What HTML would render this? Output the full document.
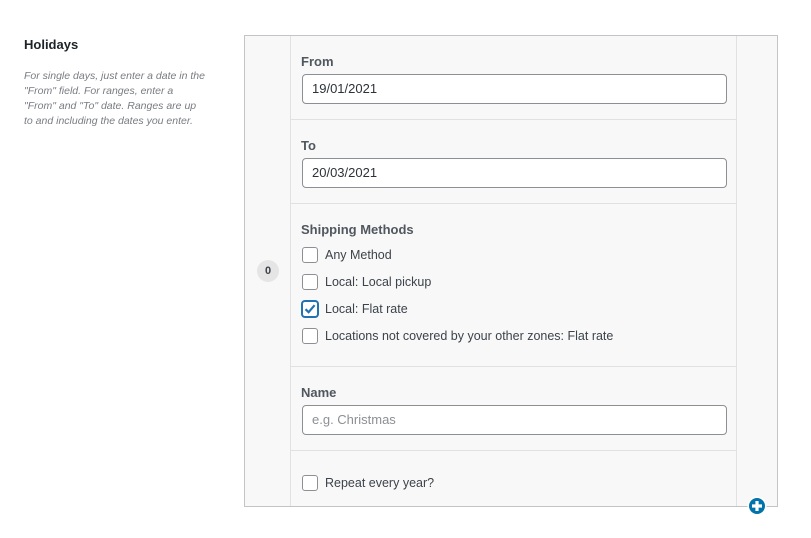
<!DOCTYPE html>
<html><head><style>
body{margin:0;background:#fff;font-family:"Liberation Sans",Arial,sans-serif;color:#3c434a;width:811px;height:538px;position:relative;overflow:hidden}
.a{position:absolute}
h3{position:absolute;left:24px;top:37px;margin:0;font-size:13px;font-weight:bold;color:#1d2327}
.desc{left:24px;top:69px;width:215px;font-size:10.5px;font-style:italic;color:#787c82;line-height:15px;white-space:nowrap}
.box{left:244px;top:35px;width:532px;height:470px;border:1px solid #c3c4c7;background:#f8f8f8}
.lc{left:0;top:0;width:45px;height:470px;border-right:1px solid #e1e1e1}
.rc{left:491px;top:0;width:40px;height:470px;border-left:1px solid #e1e1e1}
.row{position:absolute;left:46px;width:445px;border-bottom:1px solid #e1e1e1}
.lbl{position:absolute;left:10px;font-size:13px;font-weight:bold;color:#50575e}
.inp{position:absolute;left:11px;width:423px;height:28px;border:1px solid #8c8f94;border-radius:4px;background:#fff;font-size:13px;line-height:28px;text-indent:9px;color:#2c3338;box-sizing:content-box}
.cb{position:absolute;left:11px;width:14px;height:14px;border:1px solid #8c8f94;border-radius:3px;background:#fff}
.ct{position:absolute;left:34px;font-size:12.5px;color:#3c434a}
.badge{left:12px;top:224px;width:22px;height:22px;border-radius:50%;background:#e5e5e5;font-size:11px;font-weight:bold;text-align:center;line-height:22px;color:#3c434a}
</style></head><body>
<h3>Holidays</h3>
<div class="a desc">For single days, just enter a date in the<br>"From" field. For ranges, enter a<br>"From" and "To" date. Ranges are up<br>to and including the dates you enter.</div>
<div class="a box">
 <div class="a lc"><div class="a badge">0</div></div>
 <div class="a rc"></div>
 <div class="row" style="top:0;height:83px"><div class="lbl" style="top:18px">From</div><div class="inp" style="top:38px">19/01/2021</div></div>
 <div class="row" style="top:84px;height:83px"><div class="lbl" style="top:18px">To</div><div class="inp" style="top:38px">20/03/2021</div></div>
 <div class="row" style="top:168px;height:162px"><div class="lbl" style="top:18px">Shipping Methods</div>
  <div class="cb" style="top:43px"></div><div class="ct" style="top:44px">Any Method</div>
  <div class="cb" style="top:70px"></div><div class="ct" style="top:71px">Local: Local pickup</div>
  <div class="cb" style="top:97px;border-color:#2271b1;box-shadow:0 0 0 1px #2271b1"><svg width="14" height="14" viewBox="0 0 14 14" style="position:absolute;left:0;top:0"><path d="M2.5 7.2 L5.6 10.2 L11.6 3.2" stroke="#2271b1" stroke-width="2.2" fill="none"/></svg></div><div class="ct" style="top:98px">Local: Flat rate</div>
  <div class="cb" style="top:124px"></div><div class="ct" style="top:125px">Locations not covered by your other zones: Flat rate</div>
 </div>
 <div class="row" style="top:331px;height:83px"><div class="lbl" style="top:18px">Name</div><div class="inp" style="top:38px;color:#8c8f94">e.g. Christmas</div></div>
 <div class="row" style="top:415px;height:55px;border-bottom:none"><div class="cb" style="top:24px"></div><div class="ct" style="top:25px">Repeat every year?</div></div>
</div>
<svg class="a" style="left:747px;top:496px" width="20" height="20" viewBox="0 0 20 20"><circle cx="10" cy="10" r="9.5" fill="#fff"/><circle cx="10" cy="10" r="8" fill="#0073aa"/><path d="M10 5v10M5 10h10" stroke="#fff" stroke-width="3.2"/></svg>
</body></html>
